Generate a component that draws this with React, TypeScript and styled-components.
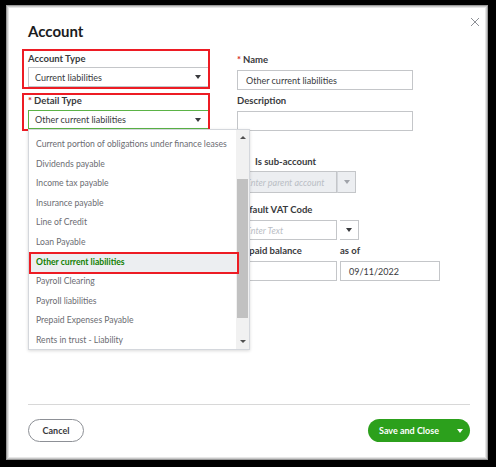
import React from "react";
import styled, { createGlobalStyle } from "styled-components";

const GlobalStyle = createGlobalStyle`
  html, body {
    margin: 0;
    padding: 0;
    background: #000;
  }
  * {
    box-sizing: border-box;
  }
`;

const Screen = styled.div`
  width: 496px;
  height: 467px;
  padding: 5px 8px 7px 6px;
  background: #000;
  font-family: "Lato", "Open Sans", sans-serif;
  color: #393a3d;
`;

const Dialog = styled.div`
  position: relative;
  height: 100%;
  background: #fff;
  border: 1px solid #9a9a9a;
  box-shadow: inset 0 0 0 1px #c9c9c9, inset 0 0 0 2px #e6e6e6;
  padding: 14px 17px 0 21px;
  display: flex;
  flex-direction: column;
`;

const Title = styled.h1`
  margin: 2px 0 0;
  font-size: 15px;
  font-weight: 700;
  color: #1b1c1e;
  height: 21px;
`;

const CloseButton = styled.button`
  position: absolute;
  top: 9px;
  right: 5px;
  width: 14px;
  height: 14px;
  padding: 0;
  border: none;
  background: none;
  display: flex;
  align-items: center;
  justify-content: center;
`;

const Body = styled.div`
  position: relative;
  flex: 1;
  display: grid;
  grid-template-columns: 188px 1fr;
  column-gap: 27px;
  align-items: start;
  margin-top: 6px;
  margin-left: -6px;
`;

const LeftColumn = styled.div`
  display: flex;
  flex-direction: column;
  gap: 4px;
`;

const RightColumn = styled.div`
  display: flex;
  flex-direction: column;
  padding-top: 5px;
`;

const Marked = styled.div<{ $height: number; $top: number }>`
  height: ${(p) => p.$height}px;
  border: 2px solid #ed1c24;
  padding: ${(p) => p.$top}px 0 0 4px;
  overflow: hidden;
`;

const Label = styled.label<{ $indent?: number }>`
  display: block;
  font-size: 9.5px;
  font-weight: 700;
  color: #393a3d;
  height: 12px;
  line-height: 12px;
  padding-left: ${(p) => p.$indent ?? 0}px;
  white-space: nowrap;
`;

const Required = styled.span`
  color: #d52b1e;
  margin-right: 2px;
`;

const Select = styled.div<{ $active?: boolean }>`
  margin-top: ${(p) => (p.$active ? 3 : 2)}px;
  height: ${(p) => (p.$active ? 19 : 20)}px;
  border: 1px solid ${(p) => (p.$active ? "#5bb346" : "#c4c6c9")};
  border-right: none;
  display: flex;
  align-items: center;
  justify-content: space-between;
  padding: 0 7px 0 6px;
  font-size: 9px;
  color: #393a3d;
`;

const Caret = styled.span<{ $muted?: boolean }>`
  width: 0;
  height: 0;
  border-left: 3px solid transparent;
  border-right: 3px solid transparent;
  border-top: 4px solid ${(p) => (p.$muted ? "#a0a3a9" : "#393a3d")};
`;

const Input = styled.div<{ $width: number; $height?: number; $disabled?: boolean; $placeholder?: boolean; $flush?: boolean }>`
  width: ${(p) => p.$width}px;
  height: ${(p) => p.$height ?? 20}px;
  margin-top: ${(p) => (p.$flush ? 0 : 4)}px;
  border: 1px solid #c4c6c9;
  background: ${(p) => (p.$disabled ? "#eceef1" : "#fff")};
  display: flex;
  align-items: center;
  padding: 0 8px;
  font-size: 9px;
  font-style: ${(p) => (p.$placeholder ? "italic" : "normal")};
  color: ${(p) => (p.$placeholder ? "#babec5" : "#393a3d")};
  white-space: nowrap;
  overflow: hidden;
`;

const Combo = styled.div`
  display: flex;
  margin-top: 3px;
`;

const ComboButton = styled.div<{ $disabled?: boolean; $flush?: boolean; $height?: number }>`
  width: 19px;
  height: ${(p) => p.$height ?? 20}px;
  margin-top: ${(p) => (p.$flush ? 0 : 4)}px;
  border: 1px solid #c4c6c9;
  border-left: ${(p) => (p.$disabled ? "1px solid #d4d7dc" : "none")};
  background: ${(p) => (p.$disabled ? "#eceef1" : "#fff")};
  display: flex;
  align-items: center;
  justify-content: center;
`;

const Field = styled.div<{ $top: number }>`
  margin-top: ${(p) => p.$top}px;
`;

const Row = styled.div`
  display: flex;
  gap: 3px;
`;

const Menu = styled.div`
  position: absolute;
  left: 6px;
  top: 80px;
  width: 222px;
  height: 221px;
  background: #fff;
  border: 1px solid #d4d7dc;
  box-shadow: 0 1px 3px rgba(0, 0, 0, 0.15);
  display: flex;
  z-index: 2;
`;

const MenuList = styled.ul`
  list-style: none;
  margin: 0;
  padding: 5px 0 0;
  flex: 1;
`;

const MenuItem = styled.li<{ $selected?: boolean }>`
  position: relative;
  height: 19.6px;
  line-height: 19.6px;
  padding-left: 7px;
  font-size: 8.6px;
  white-space: nowrap;
  color: ${(p) => (p.$selected ? "#108000" : "#6b6c72")};
  font-weight: ${(p) => (p.$selected ? 700 : 400)};
  background: ${(p) => (p.$selected ? "#eceef1" : "transparent")};
  ${(p) =>
    p.$selected &&
    `&::after {
      content: "";
      position: absolute;
      left: 0;
      right: -3px;
      top: -1px;
      bottom: -2px;
      border: 2px solid #ed1c24;
    }`}
`;

const Scrollbar = styled.div`
  width: 13px;
  background: #f1f1f1;
  display: flex;
  flex-direction: column;
  align-items: center;
  padding: 3px 0;
`;

const ScrollArrow = styled.span<{ $up?: boolean }>`
  width: 0;
  height: 0;
  margin: 3px 0;
  border-left: 3px solid transparent;
  border-right: 3px solid transparent;
  ${(p) => (p.$up ? "border-bottom: 3px solid #505050;" : "border-top: 3px solid #505050;")}
`;

const ScrollTrack = styled.div`
  flex: 1;
  width: 100%;
  padding: 37px 1px 19px;
`;

const ScrollThumb = styled.div`
  height: 100%;
  background: #c1c1c1;
`;

const Footer = styled.div`
  border-top: 1px solid #d8d8d8;
  margin-bottom: 17px;
  padding: 14px 0 0;
  display: flex;
  justify-content: space-between;
  align-items: center;
`;

const CancelButton = styled.button`
  width: 56px;
  height: 23px;
  border: 1px solid #8d9096;
  border-radius: 12px;
  background: #fff;
  font-family: inherit;
  font-size: 9px;
  font-weight: 700;
  color: #393a3d;
`;

const SaveButton = styled.button`
  width: 102px;
  height: 23px;
  border: none;
  border-radius: 12px;
  background: #2ca01c;
  color: #fff;
  font-family: inherit;
  font-size: 9px;
  font-weight: 700;
  display: flex;
  align-items: center;
  justify-content: space-between;
  padding: 0 7px 0 11px;
`;

const SaveCaret = styled.span`
  width: 0;
  height: 0;
  border-left: 3.5px solid transparent;
  border-right: 3.5px solid transparent;
  border-top: 4px solid #fff;
`;

const detailTypes = [
  "Current portion of obligations under finance leases",
  "Dividends payable",
  "Income tax payable",
  "Insurance payable",
  "Line of Credit",
  "Loan Payable",
  "Other current liabilities",
  "Payroll Clearing",
  "Payroll liabilities",
  "Prepaid Expenses Payable",
  "Rents in trust - Liability",
];

export default function App() {
  return (
    <>
      <GlobalStyle />
      <Screen>
        <Dialog>
          <Title>Account</Title>
          <CloseButton>
            <svg width="10" height="10" viewBox="0 0 10 10">
              <path d="M1 1 L9 9 M9 1 L1 9" stroke="#8d9096" strokeWidth="1" />
            </svg>
          </CloseButton>

          <Body>
            <LeftColumn>
              <Marked $height={40} $top={2}>
                <Label>Account Type</Label>
                <Select>
                  Current liabilities
                  <Caret />
                </Select>
              </Marked>
              <Marked $height={38} $top={0}>
                <Label>
                  <Required>*</Required>Detail Type
                </Label>
                <Select $active>
                  Other current liabilities
                  <Caret />
                </Select>
              </Marked>
            </LeftColumn>

            <RightColumn>
              <Label>
                <Required>*</Required>Name
              </Label>
              <Input $width={176}>Other current liabilities</Input>

              <Field $top={5}>
                <Label>Description</Label>
                <Input $width={176} />
              </Field>

              <Field $top={25}>
                <Label $indent={18}>Is sub-account</Label>
                <Combo>
                  <Input $width={100} $height={22} $disabled $placeholder $flush>
                    Enter parent account
                  </Input>
                  <ComboButton $disabled $flush $height={22}>
                    <Caret $muted />
                  </ComboButton>
                </Combo>
              </Field>

              <Field $top={11}>
                <Label>Default VAT Code</Label>
                <Row>
                  <Input $width={100} $placeholder>
                    Enter Text
                  </Input>
                  <ComboButton>
                    <Caret />
                  </ComboButton>
                </Row>
              </Field>

              <Field $top={5}>
                <Row>
                  <div>
                    <Label>Unpaid balance</Label>
                    <Input $width={100} />
                  </div>
                  <div>
                    <Label>as of</Label>
                    <Input $width={100}>09/11/2022</Input>
                  </div>
                </Row>
              </Field>
            </RightColumn>

            <Menu>
              <MenuList>
                {detailTypes.map((t) => (
                  <MenuItem key={t} $selected={t === "Other current liabilities"}>
                    {t}
                  </MenuItem>
                ))}
              </MenuList>
              <Scrollbar>
                <ScrollArrow $up />
                <ScrollTrack>
                  <ScrollThumb />
                </ScrollTrack>
                <ScrollArrow />
              </Scrollbar>
            </Menu>
          </Body>

          <Footer>
            <CancelButton>Cancel</CancelButton>
            <SaveButton>
              Save and Close
              <SaveCaret />
            </SaveButton>
          </Footer>
        </Dialog>
      </Screen>
    </>
  );
}
